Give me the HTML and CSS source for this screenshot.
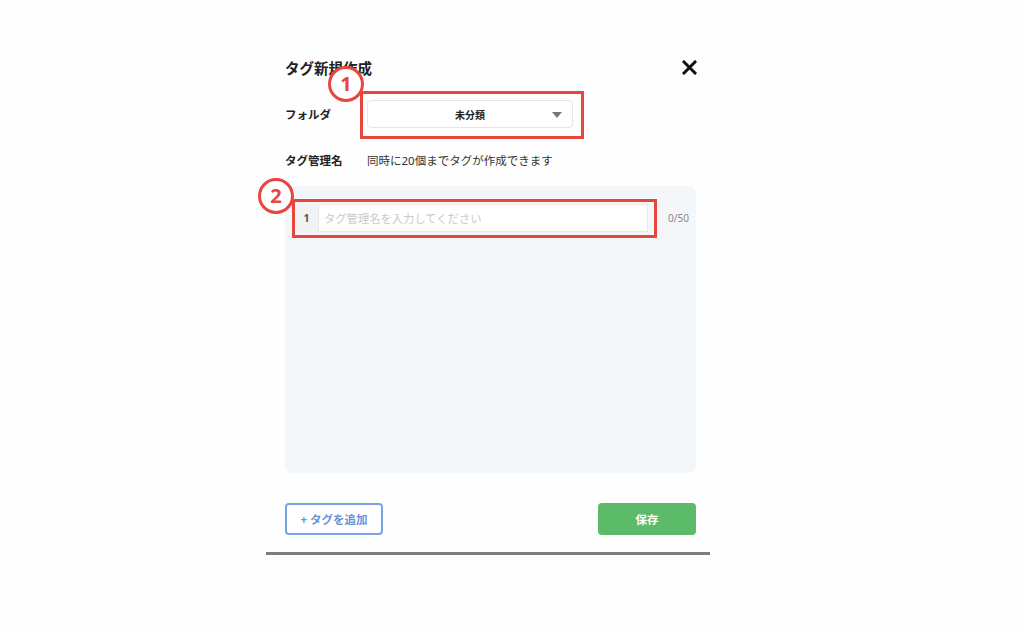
FILE: index.html
```html
<!DOCTYPE html>
<html lang="ja">
<head>
  <meta charset="UTF-8">
  <title>タグ新規作成</title>
  <meta name="viewport" content="width=device-width, initial-scale=1.0">
  <link rel="stylesheet" href="styles.css">
</head>
<body>

<div class="modal">
  <div class="modal-header">
    <h2>タグ新規作成</h2>
    <button type="button" class="close-btn" aria-label="閉じる">
      <svg width="15" height="15" viewBox="0 0 15 15">
        <path d="M2 2 L13 13 M13 2 L2 13" stroke="#111" stroke-width="3" stroke-linecap="square" fill="none"/>
      </svg>
    </button>
  </div>

  <div class="form-row folder-row">
    <label>フォルダ</label>
    <div class="select-box">
      <span>未分類</span>
      <i class="caret"></i>
    </div>
  </div>

  <div class="form-row name-row">
    <label>タグ管理名</label>
    <p class="hint">同時に20個までタグが作成できます</p>
  </div>

  <div class="tag-panel">
    <div class="tag-row">
      <span class="tag-num">1</span>
      <input type="text" placeholder="タグ管理名を入力してください">
      <span class="tag-count">0/50</span>
    </div>
  </div>

  <div class="modal-footer">
    <button type="button" class="btn-add">+ タグを追加</button>
    <button type="button" class="btn-save">保存</button>
  </div>
</div>

<!-- annotation overlay -->
<div class="mark mark-box box-1"></div>
<div class="mark mark-circle circle-1">1</div>
<div class="mark mark-box box-2"></div>
<div class="mark mark-circle circle-2">2</div>

</body>
</html>
```

FILE: styles.css
```css
* {
  margin: 0;
  padding: 0;
  box-sizing: border-box;
}

body {
  font-family: "Noto Sans", "Noto Sans CJK JP", sans-serif;
  background: #fefefe;
  color: #222;
  position: relative;
  height: 629px;
  overflow: hidden;
}

.modal {
  width: 444px;
  margin-left: 266px;
  padding: 56px 14px 17px 19px;
  border-bottom: 3px solid #7d7d7d;
}

.modal-header {
  display: flex;
  justify-content: space-between;
  align-items: center;
  height: 22px;
}

.modal-header h2 {
  font-size: 14.5px;
  font-weight: 700;
  color: #222;
}

.close-btn {
  border: none;
  background: none;
  display: flex;
  cursor: pointer;
  margin-right: -1px;
}

.form-row {
  display: flex;
  align-items: center;
}

.form-row label {
  width: 82px;
  font-size: 11.5px;
  font-weight: 700;
  color: #222;
}

.folder-row {
  margin-top: 22px;
}

.select-box {
  width: 206px;
  height: 28px;
  border: 1px solid #e6e6e6;
  border-radius: 4px;
  background: #fff;
  display: flex;
  align-items: center;
  justify-content: center;
  position: relative;
  font-size: 10px;
  font-weight: 700;
}

.caret {
  position: absolute;
  right: 10px;
  top: 11px;
  width: 0;
  height: 0;
  border-left: 5px solid transparent;
  border-right: 5px solid transparent;
  border-top: 6px solid #777;
}

.name-row {
  margin-top: 24px;
  height: 16px;
}

.hint {
  font-size: 11.5px;
  color: #333;
}

.tag-panel {
  margin-top: 18px;
  height: 287px;
  background: #f4f7fa;
  border-radius: 7px;
  padding: 18px 0 0 10px;
}

.tag-row {
  display: flex;
  align-items: center;
}

.tag-num {
  width: 23px;
  height: 28px;
  line-height: 28px;
  text-align: center;
  font-size: 10.5px;
  font-weight: 700;
  color: #555;
  background: #f1f3f5;
}

.tag-row input {
  width: 330px;
  height: 28px;
  border: 1px solid #e8e8e8;
  background: #fff;
  padding: 0 5px;
  font-family: inherit;
  font-size: 11.3px;
  outline: none;
}

.tag-row input::placeholder {
  color: #c9c9c9;
}

.tag-count {
  margin-left: 20px;
  font-size: 10px;
  color: #888;
}

.modal-footer {
  display: flex;
  justify-content: space-between;
  margin-top: 30px;
}

.modal-footer button {
  height: 32px;
  width: 98px;
  border-radius: 4px;
  font-family: inherit;
  font-size: 11.5px;
  font-weight: 700;
  cursor: pointer;
}

.btn-add {
  background: #fff;
  border: 2px solid #7aa3e6;
  color: #6b93d8;
}

.btn-save {
  background: #5cbb69;
  border: none;
  color: #fff;
}

/* annotations drawn over the screen */
.mark {
  position: absolute;
}

.mark-box {
  border: 3px solid #e8463d;
}

.box-1 {
  left: 360px;
  top: 91px;
  width: 224px;
  height: 48px;
}

.box-2 {
  left: 292px;
  top: 199px;
  width: 365px;
  height: 39px;
}

.mark-circle {
  width: 36px;
  height: 36px;
  border: 3px solid #e8463d;
  border-radius: 50%;
  background: #fff;
  color: #e8463d;
  font-size: 20px;
  font-weight: 700;
  display: flex;
  align-items: center;
  justify-content: center;
  line-height: 1;
}

.circle-1 {
  left: 328px;
  top: 66px;
}

.circle-2 {
  left: 258px;
  top: 178px;
}
```
